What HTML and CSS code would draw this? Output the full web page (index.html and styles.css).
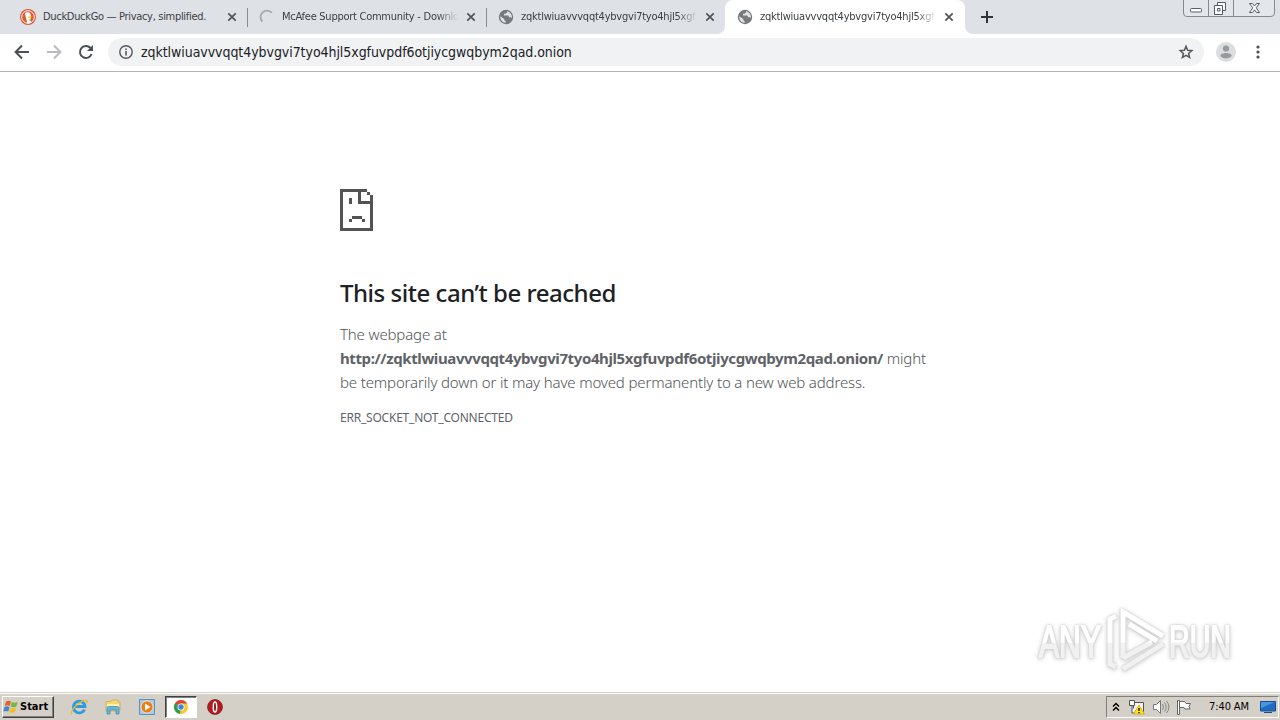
FILE: index.html
```html
<!DOCTYPE html>
<html lang="en">

	<head>
		<meta charset="UTF-8">
		<title>This site can’t be reached</title>
		<link rel="stylesheet" href="styles.css">
	</head>

	<body>
		<svg class="defs">
			<symbol id="globe" viewBox="0 0 16 16">
				<circle cx="8" cy="8" r="7.2" fill="#77797c" />
				<path d="M2.200 7.200 6.300 10v1.200l1.400 1v1.600C4.500 13.800 2 11 2.200 7.200zM9 2.200v1.300L7.500 4.800H6V6.500h4.200l1 1.800h1.500l1.100.8c.7-3-1.300-6.200-4.800-6.900z" fill="#dee1e6" />
			</symbol>
			<symbol id="close" viewBox="0 0 10 10">
				<path d="M1.300 1.300 8.700 8.700M8.700 1.300 1.300 8.700" stroke="#505357" stroke-width="1.700" />
			</symbol>
		</svg>

		<div class="browser">
			<div class="tabs">
				<div class="tab">
					<svg class="favicon" viewBox="0 0 16 16">
						<circle cx="8" cy="8" r="8" fill="#de5833" />
						<circle cx="8" cy="8" r="6.300" fill="#de5833" stroke="#fff" stroke-width="1" />
						<path d="M5 5.200C4.700 3.500 6.500 2.800 8.500 3.300c2.200.8 2.500 2.600 2.300 4.700l-.3 2 .5 3.600c-1 .5-2.500.7-3.700.4z" fill="#fff" />
						<path d="M8.200 7.500 11.800 7.300 11 8.800 8.300 9.200z" fill="#fdd20a" />
						<path d="M8.300 10.800l2.700-.5v2z" fill="#65bc46" />
					</svg>
					<span class="title t1">DuckDuckGo — Privacy, simplified.</span>
					<svg class="close"><use href="#close" /></svg>
				</div>
				<div class="tab">
					<svg class="favicon" viewBox="0 0 16 16">
						<path d="M3.300 12.500A6.300 6.300 0 0 1 12.800 3.700" fill="none" stroke="#a5a8ad" stroke-width="1.900" />
					</svg>
					<span class="title t2">McAfee Support Community - Downlo</span>
					<svg class="close"><use href="#close" /></svg>
				</div>
				<div class="tab last">
					<svg class="favicon"><use href="#globe" /></svg>
					<span class="title t3">zqktlwiuavvvqqt4ybvgvi7tyo4hjl5xgf</span>
					<svg class="close"><use href="#close" /></svg>
				</div>
				<div class="tab active">
					<svg class="favicon"><use href="#globe" /></svg>
					<span class="title t3">zqktlwiuavvvqqt4ybvgvi7tyo4hjl5xgf</span>
					<svg class="close"><use href="#close" /></svg>
				</div>
				<svg class="newTab" viewBox="0 0 12 12"><path d="M6 0v12M0 6h12" stroke="#303338" stroke-width="2" /></svg>
				<svg class="winBtns" viewBox="0 0 94 18">
					<path d="M1.500 0v13q0 3.500 3.500 3.500h84q3.500 0 3.500-3.500V0M26.500 0v16M51.500 0v16" fill="#e3e6ea" stroke="#858990" />
					<rect x="8.500" y="8.500" width="11" height="3.500" rx="1" fill="#fff" stroke="#555a64" />
					<path d="M35.500 2.500h8v8h-8z" fill="#fff" stroke="#555a64" />
					<path d="M32.500 5.500h8v9h-8zM35.500 8.500h2.500v2.500h-2.500z" fill="#fff" stroke="#555a64" />
					<path d="M67.500 3.500h3l2 2.500 2-2.500h3l-3.300 4.300 3.300 4.700h-3l-2-2.700-2 2.700h-3l3.300-4.700z" fill="#fff" stroke="#555a64" />
				</svg>
			</div>

			<div class="toolbar">
				<svg class="nav" viewBox="0 0 16 16"><path d="M15 8H2M8 1.500 1.600 8 8 14.500" fill="none" stroke="#4c4f53" stroke-width="2" /></svg>
				<svg class="nav" viewBox="0 0 16 16"><path d="M1 8H14M8 1.500 14.400 8 8 14.500" fill="none" stroke="#b9bbbe" stroke-width="2" /></svg>
				<svg class="nav" viewBox="0 0 16 16"><path d="M13.600 10A6 6 0 1 1 12.300 3.800L14 5.500" fill="none" stroke="#4c4f53" stroke-width="2" /><path d="M15 1v6H9z" fill="#4c4f53" /></svg>
				<div class="omnibox">
					<svg class="info" viewBox="0 0 14 14">
						<circle cx="7" cy="7" r="6.200" fill="none" stroke="#55585c" stroke-width="1.400" />
						<path d="M7 6v4.500M7 3.500V5" stroke="#55585c" stroke-width="1.600" />
					</svg>
					<span class="url">zqktlwiuavvvqqt4ybvgvi7tyo4hjl5xgfuvpdf6otjiycgwqbym2qad.onion</span>
					<svg class="star" viewBox="0 0 16 16"><path d="M8 2.300 9.600 6.200l4.200.4-3.200 2.800 1 4.100L8 11.300l-3.600 2.200 1-4.100-3.200-2.800 4.200-.4z" fill="none" stroke="#55585c" stroke-width="1.500" /></svg>
				</div>
				<svg class="avatar" viewBox="0 0 20 20">
					<circle cx="10" cy="10" r="10" fill="#dcdddf" />
					<circle cx="10" cy="6.500" r="3.100" fill="#97999c" />
					<path d="M4.300 14c0-4 11.400-4 11.400 0-2.500 3.300-8.900 3.300-11.400 0z" fill="#97999c" />
				</svg>
				<svg class="menu" viewBox="0 0 4 14"><g fill="#4c4f53"><circle cx="2" cy="2" r="1.600" /><circle cx="2" cy="7" r="1.600" /><circle cx="2" cy="12" r="1.600" /></g></svg>
			</div>

			<div class="page">
				<div class="error">
					<svg class="sad" viewBox="0 0 33 42" shape-rendering="crispEdges">
						<path d="M0 0h27v3h3v3h3v36H0zM3 3v36h27V15H18V3zM21 3v9h9V6h-3V3zM9 9h3v6H9zM12 27h10v3H12zM9 30h3v3H9zM22 30h3v3h-3z" fill="#535353" fill-rule="evenodd" />
					</svg>
					<h1>This site can’t be reached</h1>
					<p>
						The webpage at<br>
						<b>http://zqktlwiuavvvqqt4ybvgvi7tyo4hjl5xgfuvpdf6otjiycgwqbym2qad.onion/</b> might<br>
						be temporarily down or it may have moved permanently to a new web address.
					</p>
					<div class="code">ERR_SOCKET_NOT_CONNECTED</div>
				</div>
				<svg class="watermark" viewBox="0 0 210 72">
					<linearGradient id="fade" x1="0" y1="0" x2="0" y2="72" gradientUnits="userSpaceOnUse">
						<stop offset=".5" stop-color="#fff" />
						<stop offset=".52" stop-color="#f1f1f1" />
					</linearGradient>
					<g class="mark">
						<text x="9" y="51" textLength="62" lengthAdjust="spacingAndGlyphs">ANY</text>
						<text x="139" y="51" textLength="62" lengthAdjust="spacingAndGlyphs">RUN</text>
						<path d="M86 10 80 13V58l6 3M93 52V6L133 30M99 18l28 17M133 38 93 63M93 52 122 36" />
					</g>
				</svg>
			</div>
		</div>

		<div class="taskbar">
			<div class="start">
				<svg viewBox="0 0 16 16">
					<path d="M3 2.500q2.500-1.500 5 0L6.800 7q-2.500-1.400-5 0z" fill="#e8622a" />
					<path d="M8.800 3q2.500 1.500 6 0l-1.500 4.600q-3 1.400-5.600 0z" fill="#76b83f" />
					<path d="M1.500 8q2.500-1.500 5 0l-1.300 4.600q-2.500-1.400-5 0z" fill="#3f85d0" />
					<path d="M7.500 8.600q2.500 1.500 5.600 0l-1.500 4.700q-3 1.400-5.500 0z" fill="#f5bd26" />
				</svg>
				<span>Start</span>
			</div>
			<div class="launch">
				<svg viewBox="0 0 18 18">
					<path d="M14.500 11.500A5.800 5.800 0 1 1 15 8.500H5" fill="none" stroke="#2f9bdd" stroke-width="2.800" />
					<path d="M1.500 16.500C-.5 12 12 1 16.500 2.500c.8.500.6 2 0 3" fill="none" stroke="#ebb92c" stroke-width="1.300" />
				</svg>
			</div>
			<div class="launch">
				<svg viewBox="0 0 18 18">
					<path d="M2 3.500h5l1-1.500h6v2h2v9H2z" fill="#f3d872" stroke="#c9a746" stroke-width=".7" />
					<path d="M3 6h12v4H3z" fill="#fff3b4" />
					<path d="M3 16V10q0-1.500 1.500-1.500h9q1.500 0 1.500 1.500v6h-3v-4H6v4z" fill="#65b5d9" stroke="#3c88b2" stroke-width=".7" />
				</svg>
			</div>
			<div class="launch">
				<svg viewBox="0 0 18 18">
					<path d="M1.500 1.500h15v15h-15z" fill="#a4cbe8" stroke="#5893bf" />
					<circle cx="9" cy="9" r="6" fill="#f07d12" stroke="#fff" stroke-width=".6" />
					<path d="M7 5.500 12.500 9 7 12.500z" fill="#fff" />
				</svg>
			</div>
			<div class="launch pressed">
				<svg viewBox="0 0 18 18">
					<circle cx="9" cy="9" r="7" fill="#f5c92b" />
					<path d="M9 9 2.900 5.500A7 7 0 0 1 15.100 5.500H9z" fill="#df4335" />
					<path d="M9 9 8 16A7 7 0 0 1 2.900 5.500z" fill="#2c9c50" />
					<circle cx="9" cy="9" r="3.500" fill="#fff" />
					<circle cx="9" cy="9" r="2.700" fill="#4581e5" />
				</svg>
			</div>
			<div class="launch">
				<svg viewBox="0 0 18 18">
					<circle cx="9" cy="9" r="7.500" fill="#b51a1e" stroke="#6b0d10" stroke-width=".6" />
					<ellipse cx="9" cy="9" rx="1.700" ry="5" fill="#8c1013" stroke="#fff" stroke-width="1.500" />
				</svg>
			</div>
			<div class="tray">
				<svg class="chev" viewBox="0 0 8 10"><path d="M1 4.500 4 1.500l3 3M1 8.500l3-3 3 3" fill="none" stroke="#000" stroke-width="1.500" /></svg>
				<svg class="net" viewBox="0 0 18 16">
					<path d="M5.500 3.500h10v9h-10z" fill="#f5f5f5" stroke="#555" />
					<path d="M1.500 1.500h5v5h-5zM4 7v7h4" fill="#fff" stroke="#555" />
					<path d="M11 6 16.500 15h-11z" fill="#ffe21b" stroke="#c7a100" stroke-width=".7" />
					<path d="M11 9v3M11 13v1.200" stroke="#000" stroke-width="1.300" />
				</svg>
				<svg class="snd" viewBox="0 0 18 16">
					<path d="M1.500 5.500h3l4-4v13l-4-4h-3z" fill="#fff" stroke="#777" />
					<path d="M10.500 5q2 3 0 6M12.500 3.500q3.500 4.500 0 9M14.500 2q5 6 0 12" fill="none" stroke="#888" />
				</svg>
				<svg class="flag" viewBox="0 0 18 16">
					<path d="M2.500 15.500V1.500h2v14zM4.500 2.500h5l1.500 2h4.500l-1.500 3 1 2.500h-5l-1-1.500H4.500z" fill="#fff" stroke="#666" />
				</svg>
				<span class="clock">7:40 AM</span>
				<svg class="desk" viewBox="0 0 16 14">
					<path d="M.5 1.500h15v9.500H.5z" fill="#1f6cc0" stroke="#184e8d" />
					<path d="M1 2h14L1 8z" fill="#4a96df" />
					<path d="M4 12.500h8" stroke="#184e8d" />
				</svg>
			</div>
		</div>
	</body>

</html>
```
FILE: styles.css
```css
body {
	margin: 0;
	width: 1280px;
	height: 720px;
	display: flex;
	flex-direction: column;
	overflow: hidden;
	background: #fff;
	font-family: "Noto Sans", sans-serif;
}

svg {
	display: block;
	flex: none;
}

.defs {
	width: 0;
	height: 0;
	position: absolute;
}

.browser {
	height: 692px;
	display: flex;
	flex-direction: column;
}

.tabs {
	height: 34px;
	background: #dee1e6;
	display: flex;
	padding-left: 8px;
}

.tab {
	width: 239px;
	height: 34px;
	box-sizing: border-box;
	padding: 0 10px 0 12px;
	display: flex;
	align-items: center;
	position: relative;
}

.tab:not(.last):not(.active)::after {
	content: "";
	position: absolute;
	right: -1px;
	top: 8px;
	width: 1px;
	height: 19px;
	background: #888b90;
}

.active {
	background: #fff;
	border-radius: 8px 8px 0 0;
	width: 240px;
	margin-right: 16px;
}

.active::before,
.active::after {
	content: "";
	position: absolute;
	bottom: 0;
	width: 8px;
	height: 8px;
}

.active::before {
	left: -8px;
	background: radial-gradient(circle at 0 0, #dee1e6 7.5px, #fff 8.5px);
}

.active::after {
	right: -8px;
	background: radial-gradient(circle at 100% 0, #dee1e6 7.5px, #fff 8.5px);
}

.favicon {
	width: 16px;
	height: 16px;
}

.title {
	width: 176px;
	margin-left: 7px;
	white-space: nowrap;
	font-family: "DejaVu Sans Condensed", "DejaVu Sans", sans-serif;
	font-size: 11px;
	line-height: 20px;
	color: #3c4043;
}

.t1 {
	letter-spacing: -0.31px;
}

.t2 {
	letter-spacing: -0.26px;
}

.t3 {
	letter-spacing: -0.23px;
}

.t2,
.t3 {
	-webkit-mask-image: linear-gradient(to right, #000 155px, transparent 177px);
}

.close {
	width: 10px;
	height: 10px;
	margin-left: 8px;
}

.newTab {
	width: 12px;
	height: 12px;
	margin-top: 11px;
}

.winBtns {
	width: 94px;
	height: 18px;
	margin-left: auto;
	margin-right: 4px;
}

.toolbar {
	height: 36px;
	padding-bottom: 1px;
	border-bottom: 1px solid #b3b3b3;
	display: flex;
	align-items: center;
	padding-left: 14px;
}

.nav {
	width: 16px;
	height: 16px;
	margin-right: 16px;
}

.omnibox {
	width: 1096px;
	height: 28px;
	box-sizing: border-box;
	margin-left: -2px;
	padding: 0 10px 0 11px;
	border-radius: 14px;
	background: #f0f2f4;
	display: flex;
	align-items: center;
}

.info {
	width: 14px;
	height: 14px;
}

.url {
	margin-left: 8px;
	font-family: "DejaVu Sans Condensed", "DejaVu Sans", sans-serif;
	font-size: 14px;
	line-height: 20px;
	letter-spacing: -0.06px;
	color: #202124;
}

.star {
	width: 16px;
	height: 16px;
	margin-left: auto;
}

.avatar {
	width: 20px;
	height: 20px;
	margin-left: 12px;
}

.menu {
	width: 4px;
	height: 14px;
	margin-left: 20px;
}

.page {
	flex: 1;
	display: flex;
	position: relative;
}

.error {
	width: 600px;
	margin: 117px auto 0;
	color: #5f6368;
	white-space: nowrap;
}

.sad {
	width: 33px;
	height: 42px;
}

h1 {
	margin: 47px 0 0;
	font-size: 24px;
	font-weight: 500;
	line-height: 30px;
	letter-spacing: -0.47px;
	color: #202124;
}

p {
	margin: 14px 0 0;
	font-size: 15px;
	font-weight: 300;
	line-height: 24px;
	letter-spacing: -0.15px;
	color: #505357;
}

b {
	font-weight: 700;
	letter-spacing: -0.39px;
	color: #5f6368;
}

.code {
	margin-top: 13px;
	font-size: 12px;
	line-height: 22px;
	letter-spacing: -0.22px;
}

.watermark {
	position: absolute;
	left: 1030px;
	top: 534px;
	width: 210px;
	height: 72px;
}

.mark {
	fill: none;
	stroke: url(#fade);
	stroke-width: 5;
	filter: drop-shadow(0 0 1px #ccc) drop-shadow(0 1px 2px #ccc);
}

.mark text {
	font-family: "Liberation Sans", sans-serif;
	font-size: 45px;
	fill: url(#fade);
	stroke-width: 2;
}

.taskbar {
	height: 28px;
	box-sizing: border-box;
	border-top: 1px solid #d4d0c8;
	box-shadow: inset 0 1px #fff;
	background: #d4d0c8;
	display: flex;
	align-items: center;
	padding: 0 1px 0 2px;
}

.start {
	width: 52px;
	height: 22px;
	box-sizing: border-box;
	border: 1px solid;
	border-color: #fff #404040 #404040 #fff;
	box-shadow: inset -1px -1px #808080;
	margin-right: 9px;
	display: flex;
	align-items: center;
	font-family: "DejaVu Sans Condensed", "DejaVu Sans", sans-serif;
	font-size: 11px;
	font-weight: bold;
	color: #000;
}

.start svg {
	width: 16px;
	height: 16px;
	margin-right: 1px;
}

.launch {
	width: 32px;
	height: 22px;
	box-sizing: border-box;
	margin-right: 2px;
	display: flex;
	align-items: center;
	justify-content: center;
}

.launch svg {
	width: 18px;
	height: 18px;
}

.pressed {
	background: #fff;
	border: 1px solid;
	border-color: #404040 #fff #fff #404040;
	box-shadow: inset 1px 1px #808080;
}

.tray {
	width: 173px;
	height: 22px;
	box-sizing: border-box;
	margin-left: auto;
	border: 1px solid;
	border-color: #808080 #fff #fff #808080;
	display: flex;
	align-items: center;
	padding-left: 5px;
}

.chev {
	width: 8px;
	height: 10px;
}

.net,
.snd,
.flag {
	width: 18px;
	height: 16px;
}

.net {
	margin-left: 8px;
}

.snd {
	margin-left: 6px;
}

.flag {
	margin-left: 5px;
}

.clock {
	width: 42px;
	margin-left: 16px;
	font-family: "DejaVu Sans Condensed", "DejaVu Sans", sans-serif;
	font-size: 11px;
	letter-spacing: -0.1px;
	white-space: nowrap;
	color: #000;
}

.desk {
	width: 16px;
	height: 14px;
	margin-left: auto;
	margin-right: 2px;
}
```
